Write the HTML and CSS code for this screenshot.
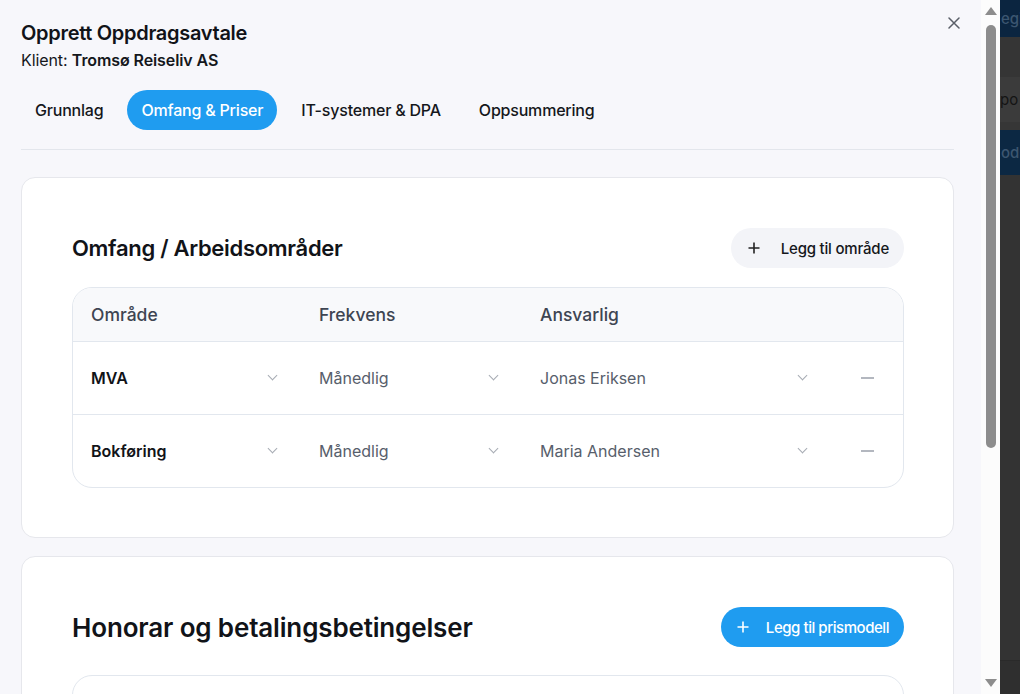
FILE: index.html
```html
<!DOCTYPE html>
<html lang="no">
<head>
<meta charset="utf-8">
<title>Opprett Oppdragsavtale</title>
<link rel="stylesheet" href="styles.css">
</head>
<body>
<div class="modal">
  <button class="close" aria-label="Lukk">
    <svg width="12" height="12" viewBox="0 0 12 12"><path d="M1 1L11 11M11 1L1 11" stroke="#5a5f68" stroke-width="1.5" stroke-linecap="round"/></svg>
  </button>
  <h1 class="title">Opprett Oppdragsavtale</h1>
  <div class="client">Klient: <strong>Tromsø Reiseliv AS</strong></div>
  <nav class="tabs">
    <span class="tab">Grunnlag</span>
    <span class="tab active">Omfang &amp; Priser</span>
    <span class="tab">IT-systemer &amp; DPA</span>
    <span class="tab">Oppsummering</span>
  </nav>
  <div class="divider"></div>

  <section class="card">
    <div class="card-head">
      <h2 class="h-scope">Omfang / Arbeidsområder</h2>
      <button class="btn btn-light">
        <svg width="12" height="12" viewBox="0 0 12 12"><path d="M6 0.5V11.5M0.5 6H11.5" stroke="#222" stroke-width="1.6"/></svg>
        <span>Legg til område</span>
      </button>
    </div>
    <div class="table">
      <div class="row head">
        <div class="cell">Område</div>
        <div class="cell">Frekvens</div>
        <div class="cell">Ansvarlig</div>
        <div class="cell"></div>
      </div>
      <div class="row">
        <div class="cell"><div class="select strong"><span>MVA</span><i class="chev"></i></div></div>
        <div class="cell"><div class="select"><span>Månedlig</span><i class="chev"></i></div></div>
        <div class="cell"><div class="select"><span>Jonas Eriksen</span><i class="chev"></i></div></div>
        <div class="cell act"><i class="dash"></i></div>
      </div>
      <div class="row">
        <div class="cell"><div class="select strong"><span>Bokføring</span><i class="chev"></i></div></div>
        <div class="cell"><div class="select"><span>Månedlig</span><i class="chev"></i></div></div>
        <div class="cell"><div class="select"><span>Maria Andersen</span><i class="chev"></i></div></div>
        <div class="cell act"><i class="dash"></i></div>
      </div>
    </div>
  </section>

  <section class="card">
    <div class="card-head">
      <h2 class="h-fee">Honorar og betalingsbetingelser</h2>
      <button class="btn btn-blue">
        <svg width="12" height="12" viewBox="0 0 12 12"><path d="M6 0.5V11.5M0.5 6H11.5" stroke="#fff" stroke-width="1.6"/></svg>
        <span>Legg til prismodell</span>
      </button>
    </div>
    <div class="table table-tall"></div>
  </section>
</div>

<div class="scrollbar">
  <i class="arrow up"></i>
  <div class="track"><div class="thumb"></div></div>
  <i class="arrow down"></i>
</div>

<div class="backdrop">
  <div class="bd bd-navy"><span class="bd-text">egis</span></div>
  <div class="bd bd-gray"></div>
  <div class="bd bd-row"><span class="bd-dark">po</span></div>
  <div class="bd bd-gap"></div>
  <div class="bd bd-navy2"><span class="bd-text">odr</span></div>
  <div class="bd bd-fill"></div>
  <div class="bd bd-foot"></div>
</div>
</body>
</html>
```

FILE: styles.css
```css
* { box-sizing: border-box; }

html, body {
  margin: 0;
  height: 694px;
  overflow: hidden;
}

body {
  display: flex;
  font-family: Inter, "Noto Sans", "Liberation Sans", sans-serif;
  color: #111827;
  background: #333;
}

.modal {
  position: relative;
  width: 981px;
  flex: none;
  height: 694px;
  overflow: hidden;
  background: #f7f7fb;
  padding: 21px 27px 0 21px;
}

.close {
  position: absolute;
  top: 17px;
  left: 948px;
  width: 12px;
  height: 12px;
  padding: 0;
  border: 0;
  background: none;
  display: flex;
}

.title {
  margin: 0;
  font-size: 20px;
  line-height: 25px;
  font-weight: 600;
  color: #111318;
  letter-spacing: -0.3px;
}

.client {
  margin-top: 4px;
  font-size: 16px;
  line-height: 20px;
  color: #15171c;
  letter-spacing: -0.1px;
}
.client strong { font-weight: 600; }

.tabs {
  margin-top: 20px;
  display: flex;
  gap: 10px;
  height: 40px;
}

.tab {
  display: flex;
  align-items: center;
  padding: 0 14px;
  height: 40px;
  border-radius: 20px;
  font-size: 16px;
  font-weight: 500;
  letter-spacing: -0.2px;
  color: #15171c;
}

.tab.active {
  background: #1f9cf0;
  color: #fff;
}

.divider {
  margin-top: 19px;
  height: 1px;
  background: #e3e6ec;
}

.card {
  margin-top: 27px;
  background: #fff;
  border: 1px solid #e6e7ec;
  border-radius: 14px;
  padding: 50px 49px 49px 50px;
}

.card + .card { margin-top: 18px; }

.card-head {
  display: flex;
  align-items: center;
  justify-content: space-between;
  height: 40px;
}

.card-head h2 {
  margin: 0;
  font-weight: 600;
  color: #111318;
}

.h-scope { font-size: 22px; letter-spacing: -0.3px; }
.h-fee { font-size: 26px; letter-spacing: -0.15px; }

.btn {
  display: flex;
  align-items: center;
  gap: 21px;
  height: 40px;
  border: 0;
  border-radius: 20px;
  font-family: inherit;
  font-size: 15px;
  font-weight: 500;
  padding: 0 15px 0 17px;
  letter-spacing: -0.2px;
}

.btn-light { background: #f3f4f8; color: #15171c; }
.btn-blue { background: #1f9cf0; color: #fff; padding-left: 16px; gap: 17px; letter-spacing: -0.45px; }

.table {
  margin-top: 19px;
  border: 1px solid #e2e7ee;
  border-radius: 20px;
  overflow: hidden;
}

.table-tall {
  margin-top: 28px;
  height: 120px;
}

.row {
  display: grid;
  grid-template-columns: 228px 221px 1fr 72px;
  height: 73px;
  border-top: 1px solid #e2e7ee;
  align-items: center;
}

.row.head {
  height: 53px;
  border-top: 0;
  background: #f8f9fb;
  font-size: 17.5px;
  font-weight: 500;
  color: #3e4552;
}

.cell {
  padding: 0 23px 0 18px;
}

.select {
  display: flex;
  align-items: center;
  justify-content: space-between;
  font-size: 16px;
  color: #575e6b;
  margin-top: -1px;
}

.select.strong {
  color: #111318;
  font-weight: 600;
}

.chev {
  width: 7px;
  height: 7px;
  border-right: 1.5px solid #a6abb3;
  border-bottom: 1.5px solid #a6abb3;
  transform: rotate(45deg);
  margin-top: -4px;
  margin-right: 2px;
}

.act {
  display: flex;
  justify-content: center;
  padding: 0;
}

.dash {
  width: 13px;
  height: 1.5px;
  background: #b3b7bf;
}

.scrollbar {
  width: 19px;
  flex: none;
  height: 694px;
  background: #fcfcfc;
  display: flex;
  flex-direction: column;
  align-items: center;
}

.arrow {
  width: 0;
  height: 0;
  border-left: 6px solid transparent;
  border-right: 6px solid transparent;
}

.arrow.up {
  margin-top: 7px;
  border-bottom: 8px solid #8d8d8d;
}

.arrow.down {
  margin-bottom: 7px;
  border-top: 8px solid #8d8d8d;
}

.track {
  flex: 1;
  width: 100%;
  display: flex;
  justify-content: center;
  padding-top: 10px;
}

.thumb {
  width: 10px;
  height: 423px;
  border-radius: 5px;
  background: #8d8d8d;
}

.backdrop {
  width: 20px;
  flex: none;
  overflow: hidden;
  display: flex;
  flex-direction: column;
  font-size: 15px;
  white-space: nowrap;
}

.bd { flex: none; display: flex; align-items: center; overflow: hidden; }
.bd-navy { height: 37px; background: #0b2540; }
.bd-gray { height: 40px; background: #353535; }
.bd-row { height: 45px; background: #3b3b3b; }
.bd-gap { height: 8px; background: #363636; }
.bd-navy2 { height: 45px; background: #0c2843; }
.bd-fill { height: 485px; background: #333; }
.bd-foot { flex: 1; background: #2f2f2f; border-top: 1px solid #2a2a2a; }

.bd-text { margin-left: 1px; color: #3c5670; font-weight: 500; }
.bd-dark { margin-left: 0; color: #141414; }
```
